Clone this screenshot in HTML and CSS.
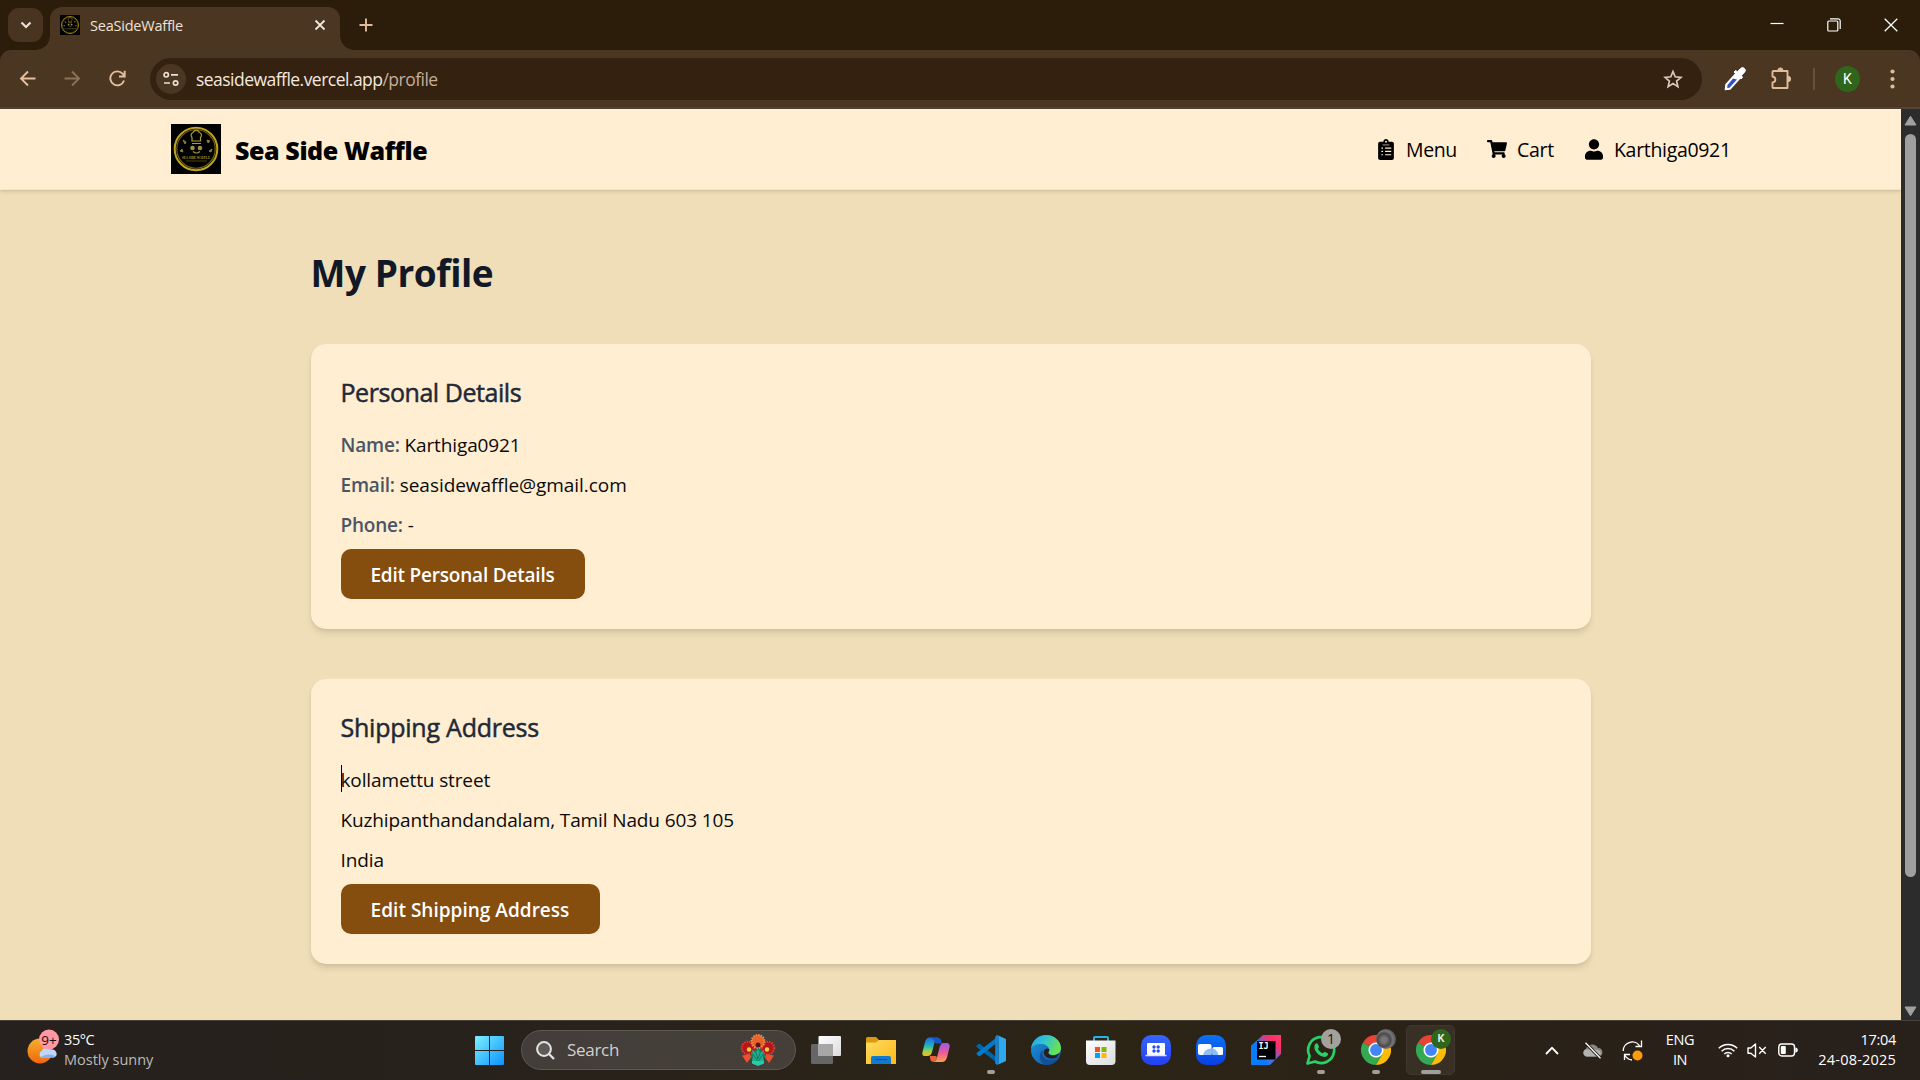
FILE: index.html
```html
<!DOCTYPE html>
<html lang="en">
<head>
<meta charset="utf-8">
<title>SeaSideWaffle</title>
<link rel="stylesheet" href="styles.css">
</head>
<body>
<svg class="defs" width="0" height="0" aria-hidden="true">
  <defs>
    <symbol id="logo" viewBox="0 0 50 50">
      <rect width="50" height="50" fill="#000"/>
      <circle cx="25" cy="25" r="21.300" fill="none" stroke="#bfa31c" stroke-width="2"/>
      <circle cx="25" cy="25" r="19.200" fill="none" stroke="#7a6814" stroke-width="1.100"/>
      <path d="M21 17v-3.500a3 3 0 0 1 1-5 3.600 3.600 0 0 1 6.500 0 3 3 0 0 1 1 5V17zM21 19.500h9" fill="none" stroke="#b39b24" stroke-width="1.200"/>
      <circle cx="21.500" cy="24" r="2.300" fill="#a08d45"/><circle cx="29" cy="24" r="2.300" fill="#a08d45"/>
      <path d="M22 27.500q3.500 3 7 0" fill="none" stroke="#a08d45" stroke-width="1.200"/>
      <path d="M12 16l3 2-1 2zM36 16l3 1-2 2zM9 27l2-2 1 3zM38 27l3-2-1 3z" fill="#8a7a3c" stroke="#8a7a3c"/>
      <text x="25" y="35" text-anchor="middle" textLength="28" lengthAdjust="spacingAndGlyphs" class="logo-text">SEA SIDE WAFFLE</text>
      <path d="M15 37h21" stroke="#6e6217" stroke-width=".7"/>
    </symbol>
    <symbol id="chrome" viewBox="0 0 48 48">
      <path d="M24 24 3.200 12A24 24 0 0 1 44.800 12H24z" fill="#ea4335"/>
      <path d="M24 24 34.400 30 24 48A24 24 0 0 1 3.200 12z" fill="#34a853"/>
      <path d="M24 12H44.800A24 24 0 0 1 24 48L34.400 30z" fill="#fbbc05"/>
      <path d="M24 12a12 12 0 1 0 .01 0z" fill="#fff"/>
      <circle cx="24" cy="24" r="9.500" fill="#4285f4"/>
    </symbol>
    <linearGradient id="gStart" x1="0" y1="0" x2="1" y2="1"><stop offset="0" stop-color="#7df0ff"/><stop offset="1" stop-color="#0a93ff"/></linearGradient>
    <linearGradient id="gSun" x1="0" y1="0" x2="0" y2="1"><stop offset="0" stop-color="#f5b02c"/><stop offset="1" stop-color="#f2660c"/></linearGradient>
    <linearGradient id="gFold" x1="0" y1="0" x2="1" y2="1"><stop offset="0" stop-color="#ffdb62"/><stop offset="1" stop-color="#fbb917"/></linearGradient>
    <linearGradient id="gCop1" x1="0" y1="0" x2="0" y2="1"><stop offset="0" stop-color="#2168e0"/><stop offset=".45" stop-color="#1cb3c4"/><stop offset=".75" stop-color="#a2d242"/><stop offset="1" stop-color="#f4b92c"/></linearGradient>
    <linearGradient id="gCop2" x1="0" y1="0" x2="0" y2="1"><stop offset="0" stop-color="#9a5ae8"/><stop offset=".5" stop-color="#ea5a9c"/><stop offset="1" stop-color="#ffa04b"/></linearGradient>
    <linearGradient id="gEdge1" x1="0" y1="0" x2="1" y2=".4"><stop offset="0" stop-color="#1fa4e4"/><stop offset=".5" stop-color="#31c4cf"/><stop offset="1" stop-color="#66e255"/></linearGradient>
    <linearGradient id="gEdge2" x1="0" y1="0" x2="1" y2="1"><stop offset="0" stop-color="#2196dc"/><stop offset="1" stop-color="#0b4fa4"/></linearGradient>
    <linearGradient id="gIj" x1="0" y1="1" x2="1" y2="0"><stop offset="0" stop-color="#087cfa"/><stop offset=".5" stop-color="#4f6fd8"/><stop offset=".75" stop-color="#fc2d6b"/><stop offset="1" stop-color="#fe4070"/></linearGradient>
    <linearGradient id="gBlue" x1="0" y1="0" x2="0" y2="1"><stop offset="0" stop-color="#3566ff"/><stop offset="1" stop-color="#2440f4"/></linearGradient>
    <linearGradient id="gZoom" x1="0" y1="0" x2="0" y2="1"><stop offset="0" stop-color="#0b72f5"/><stop offset="1" stop-color="#0a3fe0"/></linearGradient>
    <linearGradient id="gWhite" x1="0" y1="0" x2="1" y2="1"><stop offset="0" stop-color="#fff"/><stop offset="1" stop-color="#dcdcdc"/></linearGradient>
  </defs>
</svg>

<header class="tabstrip">
  <button class="tab-search"><svg width="12" height="8" viewBox="0 0 12 8"><path d="M1.500 1.500 6 6l4.500-4.500" fill="none" stroke="#eadfd4" stroke-width="2.200"/></svg></button>
  <div class="tab">
    <svg width="20" height="20"><use href="#logo"/></svg>
    <span class="tab-title">SeaSideWaffle</span>
    <svg width="12" height="12" viewBox="0 0 12 12"><path d="M1.500 1.500l9 9M10.500 1.500l-9 9" stroke="#f1e6dc" stroke-width="1.800"/></svg>
  </div>
  <svg class="new-tab" width="14" height="14" viewBox="0 0 14 14"><path d="M7 .5v13M.5 7h13" stroke="#dfbd9c" stroke-width="1.900"/></svg>
  <div class="window-buttons">
    <svg width="14" height="14" viewBox="0 0 14 14"><path d="M.5 5.500h13" stroke="#fff" stroke-width="1.200"/></svg>
    <svg width="14" height="14" viewBox="0 0 14 14" fill="none" stroke="#fff" stroke-width="1.200"><rect x=".8" y="3" width="10" height="10" rx="1"/><path d="M3 .8h8a2.200 2.200 0 0 1 2.200 2.200v8"/></svg>
    <svg width="14" height="14" viewBox="0 0 14 14"><path d="M.7 .7l12.600 12.600M13.300 .7.7 13.300" stroke="#fff" stroke-width="1.300"/></svg>
  </div>
</header>

<div class="toolbar-wrap">
<div class="toolbar">
  <div class="nav-buttons">
    <svg width="17" height="17" viewBox="0 0 17 17" fill="none" stroke="#e3bf9f" stroke-width="1.900"><path d="M16.500 8.500H2M9 1.500l-7 7 7 7"/></svg>
    <svg width="17" height="17" viewBox="0 0 17 17" fill="none" stroke="#8d725a" stroke-width="1.900"><path d="M.5 8.500H15M8 1.500l7 7-7 7"/></svg>
    <svg width="17" height="17" viewBox="0 0 17 17" fill="none" stroke="#e3bf9f" stroke-width="1.900"><path d="M15 10.500A7 7 0 1 1 13.600 3.700L15.500 6M15.700 .8v5.700H10"/></svg>
  </div>
  <div class="omnibox">
    <span class="site-info"><svg width="16" height="16" viewBox="0 0 16 16" fill="none" stroke="#eadfd4" stroke-width="1.700"><circle cx="3.200" cy="3.800" r="2.200"/><path d="M8 3.800h7M1 12h6"/><circle cx="12.600" cy="12" r="2.200"/></svg></span>
    <span class="url">seasidewaffle.vercel.app<span class="path">/profile</span></span>
    <svg class="star" width="20" height="20" viewBox="0 0 20 20" fill="none" stroke="#d9c8ba" stroke-width="1.700"><path d="M10 2.500l2.200 5.300 5.700.5-4.300 3.700 1.300 5.600L10 14.600l-4.900 3 1.300-5.600L2.100 8.300l5.700-.5z"/></svg>
  </div>
  <svg class="dropper" width="22" height="24" viewBox="0 0 22 24"><path d="M11.500 7 2 17.500 1.500 22.500 6 22 15.500 11.500z" fill="#fff" stroke="#fff" stroke-width="1.500"/><path d="M9 11.500 3.500 18l-.3 3 2.300-.3 7.500-8.200z" fill="#3552c8"/><path d="M10 5l1.500-1.500 2 1.200L16.500 1.500a2.600 2.600 0 0 1 4 3.800L17.500 8.500l1 2L17 12z" fill="#fff" stroke="#fff"/></svg>
  <svg class="puzzle" width="22" height="23" viewBox="0 0 22 23"><path d="M2.500 4h14v7.500V21h-14a1 1 0 0 1-1-1v-4.500c3.800-.6 3.800-5.400 0-6V5a1 1 0 0 1 1-1z" fill="none" stroke="#dfbd9c" stroke-width="1.900" stroke-linejoin="round"/><path d="M6.800 3.500a2.600 2.600 0 0 1 5.200 0zM17 9.300a2.700 2.700 0 0 1 0 5.400z" fill="#dfbd9c" stroke="#dfbd9c"/></svg>
  <span class="separator"></span>
  <span class="avatar">K</span>
  <svg class="kebab" width="5" height="20" viewBox="0 0 5 20" fill="#dfbd9c"><circle cx="2.500" cy="2.500" r="2.100"/><circle cx="2.500" cy="10" r="2.100"/><circle cx="2.500" cy="17.500" r="2.100"/></svg>
</div>
</div>

<div class="viewport">
  <div class="page">
    <nav class="site-nav">
      <div class="brand">
        <svg width="50" height="50"><use href="#logo"/></svg>
        <span class="brand-name">Sea Side Waffle</span>
      </div>
      <div class="links">
        <a class="link link-menu"><svg width="16" height="21" viewBox="0 0 384 512"><path fill="#000" d="M336 64h-80c0-35.300-28.700-64-64-64s-64 28.700-64 64H48C21.500 64 0 85.500 0 112v352c0 26.500 21.500 48 48 48h288c26.500 0 48-21.500 48-48V112c0-26.500-21.500-48-48-48z"/><path d="M80 224h40M170 224h150M80 304h40M170 304h150M80 384h40M170 384h150" stroke="#ffeed2" stroke-width="30"/><circle cx="192" cy="64" r="24" fill="#ffeed2"/><path d="M110 144h164" stroke="#ffeed2" stroke-width="16"/></svg><span>Menu</span></a>
        <a class="link link-cart"><svg width="20" height="20" viewBox="0 0 576 512"><path d="M528.100 301.300l47.300-208C578.800 78.300 567.400 64 552 64H159.200l-9.200-44.800C147.800 8 137.900 0 126.500 0H24C10.700 0 0 10.700 0 24v16c0 13.300 10.700 24 24 24h69.900l70.200 343.400C147.300 417.100 136 435.200 136 456c0 30.900 25.100 56 56 56s56-25.100 56-56c0-15.700-6.400-29.800-16.800-40h209.600C430.400 426.200 424 440.300 424 456c0 30.900 25.100 56 56 56s56-25.100 56-56c0-22.200-12.900-41.300-31.600-50.400l5.500-24.300c3.400-15-8-29.300-23.400-29.300H218.100l-6.500-32h293.100c11.200 0 20.900-7.800 23.400-18.700z"/></svg><span>Cart</span></a>
        <a class="link link-user"><svg width="18" height="21" viewBox="0 0 448 512"><path d="M224 256c70.700 0 128-57.300 128-128S294.700 0 224 0 96 57.300 96 128s57.300 128 128 128zm89.600 32h-16.700c-22.200 10.200-46.900 16-72.900 16s-50.600-5.800-72.900-16h-16.700C60.200 288 0 348.200 0 422.400V464c0 26.500 21.500 48 48 48h352c26.500 0 48-21.500 48-48v-41.600c0-74.200-60.200-134.400-134.400-134.400z"/></svg><span>Karthiga0921</span></a>
      </div>
    </nav>
    <main class="profile">
      <h1>My Profile</h1>
      <section class="card">
        <h2>Personal Details</h2>
        <p class="row-name"><b>Name:</b> Karthiga0921</p>
        <p class="row-email"><b>Email:</b> seasidewaffle@gmail.com</p>
        <p><b>Phone:</b> -</p>
        <button class="edit edit-personal">Edit Personal Details</button>
      </section>
      <section class="card">
        <h2 class="ship-title">Shipping Address</h2>
        <p class="caret-line">kollamettu street</p>
        <p class="row-city">Kuzhipanthandandalam, Tamil Nadu 603 105</p>
        <p>India</p>
        <button class="edit edit-shipping">Edit Shipping Address</button>
      </section>
    </main>
  </div>
  <div class="scrollbar">
    <svg width="13" height="11" viewBox="0 0 13 11"><path d="M6.500 1.200 12 10H1z" fill="#a0a0a0" stroke="#a0a0a0" stroke-linejoin="round"/></svg>
    <div class="thumb"></div>
    <svg width="13" height="11" viewBox="0 0 13 11"><path d="M6.500 9.800 12 1H1z" fill="#a0a0a0" stroke="#a0a0a0" stroke-linejoin="round"/></svg>
  </div>
</div>

<footer class="taskbar">
  <div class="weather">
    <svg width="33" height="36" viewBox="0 0 33 36"><circle cx="13" cy="22" r="12.500" fill="url(#gSun)"/><path d="M14 28.500a4 4 0 0 1 .5-6.500 5.500 5.500 0 0 1 9.500-1 3.800 3.800 0 0 1 3 7.500z" fill="#bfd7f7"/><path d="M13 28.500q7-5 15-1.500l-1 1.500z" fill="#86aeea"/><circle cx="22" cy="10.500" r="10" fill="#ff98a2"/><text x="22" y="15.500" text-anchor="middle" class="badge-text">9+</text></svg>
    <div class="weather-text"><span>35°C</span><span class="muted">Mostly sunny</span></div>
  </div>
  <div class="tasks">
    <svg class="start" width="29" height="29" viewBox="0 0 29 29" fill="url(#gStart)"><path d="M1 0h13v14H0V1a1 1 0 0 1 1-1zM15 0h13a1 1 0 0 1 1 1v13H15zM0 15h14v14H1a1 1 0 0 1-1-1zM15 15h14v13a1 1 0 0 1-1 1H15z"/></svg>
    <div class="search">
      <svg width="19" height="19" viewBox="0 0 19 19" fill="none" stroke="#e6e4e2" stroke-width="2"><circle cx="8" cy="8" r="6.900" fill="#5d5b58"/><path d="M13 13l5 5" stroke-width="2.300"/></svg>
      <span>Search</span>
      <svg class="flowers" width="36" height="32" viewBox="0 0 36 32"><path d="M8 26 18 15l10 11M18 12v18" stroke="#12826a" stroke-width="2.500" fill="none"/><circle cx="8" cy="14" r="6.300" fill="#b5161c" stroke="#e03a2c" stroke-width="2" stroke-dasharray="1.500 1"/><circle cx="28" cy="14" r="6.300" fill="#b5161c" stroke="#e03a2c" stroke-width="2" stroke-dasharray="1.500 1"/><circle cx="18" cy="7.500" r="6.500" fill="#e8632a" stroke="#f48b4b" stroke-width="2" stroke-dasharray="1.500 1"/><circle cx="18" cy="11" r="2.500" fill="#5e1518"/><circle cx="9" cy="15.500" r="2.200" fill="#f5d12e"/><circle cx="27" cy="15.500" r="2.200" fill="#f5d12e"/><path d="M2 21.500l8-1.500 1 3-4 6zM34 21.500l-8-1.500-1 3 4 6z" fill="#ef4e30"/><path d="M18 15l2 4 4-3-1 6 1 5-6 4-6-4 1-5-1-6 4 3z" fill="#1fae8c"/><path d="M16 19l2 6 2-6M13 20l5 8 5-8" fill="none" stroke="#0f7a68"/><path d="M12 27h12v2.500l-6 2.500-6-2.500z" fill="#28cda8"/></svg>
    </div>
    <div class="cell"><svg width="30" height="28" viewBox="0 0 30 28"><rect y="8" width="22" height="20" rx="1.500" fill="#666"/><rect x="7.500" width="22.500" height="20" rx="1" fill="url(#gWhite)"/><path d="M7.500 8H22v12H7.500z" fill="#a7a7a7"/></svg></div>
    <div class="cell"><svg width="30" height="27" viewBox="0 0 30 27"><path d="M0 1.500A1.500 1.500 0 0 1 1.500 0H10l3 3h15v6H0z" fill="#d99a0b"/><path d="M0 5.500h10L13 3h17v24H0z" fill="url(#gFold)"/><path d="M5 27v-6a2 2 0 0 1 2-2h16a2 2 0 0 1 2 2v6z" fill="#1279cf"/><path d="M9 22.500h12" stroke="#0a549c"/></svg></div>
    <div class="cell"><svg width="28" height="26" viewBox="0 0 28 26"><path d="M7 .5h9.500q-3 1-4 5L10 15q-1 4-4.500 4H2.500Q-.5 19 .5 15L3 5Q4.500.5 7 .5z" fill="url(#gCop1)"/><path d="M10 1h7q2 .5 2.500 3.500l.5 2h-5.500q-2-.5-2.500-3z" fill="#1656c8"/><path d="M21 6h3.500q4 .3 3 4.500L25 20.500Q23.500 25 20 25h-9q3-.5 4-4.500l2.500-10Q18.500 6.500 21 6z" fill="url(#gCop2)"/><path d="M8 19h6l1 1.500Q14 25 11 25q-2.500-.5-3-3.500z" fill="#e9623c"/></svg></div>
    <div class="cell running"><svg width="30" height="30" viewBox="0 0 100 100"><path d="M2 36 8 30q3-2 6 0L75 80v17L3 41q-3-3-1-5z" fill="#0065a9"/><path d="M2 64 8 70q3 2 6 0L75 22V3L3 59q-3 3-1 5z" fill="#007acc"/><path d="M70 100 100 87V13L70 0q5 2 5 8v84q0 6-5 8z" fill="#2fa9ee"/><path d="M70 100q5-3 5-8V8q0-5-5-8L64 5v90z" fill="#1583d2"/></svg></div>
    <div class="cell"><svg width="30" height="30" viewBox="0 0 30 30"><circle cx="15" cy="15" r="15" fill="url(#gEdge2)"/><path d="M0 14C1 5 8 0 15 0c8.500 0 15 6 15 13 0 5-4 7-7.500 7-3.500 0-5.500-1.300-5-2.500.8-1 1-2 .8-3.300C17.500 11 14 9 10 9 5 9 1 11 0 14z" fill="url(#gEdge1)"/><path d="M11.500 15c-1.500 6 3 10.500 8 10.500 4 0 6-1.300 8-3 .5-.3 1 0 .7.600C25.500 27.500 21 30 16 30 8 29 7 19 11.500 15z" fill="#124f94"/><path d="M18.300 14.500c0 2-1.500 2.500-.8 4 1 1.700 4 2.500 6.500 1.800q3-.8 4.500-2.300-2 5.500-8 5.500c-6 0-9.500-5-7-8.500 1.500-2 4-2 4.800-.5z" fill="#27211a"/></svg></div>
    <div class="cell"><svg width="30" height="30" viewBox="0 0 30 30"><path d="M8 6V3a1 1 0 0 1 1-1h12a1 1 0 0 1 1 1v3" fill="none" stroke="#23b3e8" stroke-width="2"/><path d="M0 5.500h29.500V26a4 4 0 0 1-4 4H4a4 4 0 0 1-4-4z" fill="url(#gWhite)"/><path d="M9 12h5v5H9z" fill="#f25022"/><path d="M15.500 12h5v5h-5z" fill="#7fba00"/><path d="M9 18h5v5H9z" fill="#00a4ef"/><path d="M15.500 18h5v5h-5z" fill="#ffb900"/></svg></div>
    <div class="cell"><svg width="30" height="30" viewBox="0 0 30 30"><rect width="30" height="30" rx="10.500" fill="url(#gBlue)"/><rect x="6" y="8" width="18" height="12" rx="1" fill="#fff"/><path d="M4.500 20.500h21" stroke="#dce5ff" stroke-width="1.500"/><g fill="#2a4df8"><circle cx="13" cy="12" r="1.700"/><circle cx="17.200" cy="12" r="1.700"/><circle cx="13" cy="16" r="1.700"/><circle cx="17.200" cy="16" r="1.700"/></g></svg></div>
    <div class="cell"><svg width="30" height="30" viewBox="0 0 30 30"><rect width="30" height="30" rx="10.500" fill="url(#gZoom)"/><rect x="2" y="9" width="13.500" height="11" rx="2" fill="#fff"/><rect x="16.500" y="12" width="10.500" height="8" rx="1.500" fill="#fff"/><path d="M7 20a8 7 0 0 1 8.500-6.500V20zM16.500 13.500Q21 14 22.500 20h-6z" fill="#8fc0f5"/></svg></div>
    <div class="cell"><svg width="30" height="30" viewBox="0 0 30 30"><path d="M12 0h18v19L19 30H0V11z" fill="url(#gIj)"/><path d="M0 11 9 3v15l10 12H0z" fill="#087cfa"/><rect x="6" y="6" width="18.500" height="18.500" fill="#000"/><text x="7.500" y="14" class="ij">IJ</text><path d="M8 21.500h7" stroke="#fff" stroke-width="1.300"/></svg></div>
    <div class="cell running"><svg width="30" height="30" viewBox="0 0 30 30"><path d="M1.500 28.500 3.600 21A13 13 0 1 1 9 26.500z" fill="none" stroke="#25d366" stroke-width="2.700" stroke-linejoin="round"/><path d="M9 9.500c1-1.700 2.400-1.500 2.800-.5l1.200 2.800c.2.700-1 1.700-1 2.200 1 2 2.500 3.300 4.700 4.200.6.100 1.500-1.500 2.100-1.400l2.900 1.500c.7.500.3 2.500-1.400 3.200-3 1.300-6.700-.7-9-3.200C9 15.800 7.500 12.500 9 9.500z" fill="#25d366"/></svg><span class="count">1</span></div>
    <div class="cell running"><svg width="30" height="30"><use href="#chrome"/></svg><span class="count moon"></span></div>
    <div class="cell running active"><svg width="30" height="30"><use href="#chrome"/></svg><span class="count user">K</span></div>
  </div>
  <div class="tray">
    <svg class="t-up" width="14" height="9" viewBox="0 0 14 9"><path d="M1 8l6-6.200L13 8" fill="none" stroke="#fff" stroke-width="1.800"/></svg>
    <svg class="t-cloud" width="21" height="17" viewBox="0 0 21 17"><path d="M4 14.500a4 4 0 0 1 0-7.500 6.500 6.500 0 0 1 12-1 4.300 4.300 0 0 1 1 8.500z" fill="#8a8885"/><path d="M4 14.500a4 4 0 0 1-1-7l9-.2 6 1.500a4 4 0 0 1-1 5.700z" fill="#b5b3b1"/><path d="M3.500.8l15 15.500" stroke="#272019" stroke-width="3.200"/><path d="M3.500.8l15 15.500" stroke="#fff" stroke-width="1.300"/></svg>
    <svg class="t-sync" width="21" height="21" viewBox="0 0 21 21"><path d="M1.200 11A9 9 0 0 1 18 6.500M19.500 .5v6h-6M2.500 20v-5.500H8M3 15.500q2 3.800 7 4.500" fill="none" stroke="#fff" stroke-width="1.300"/><circle cx="15.500" cy="15.500" r="5" fill="#ff9a0a"/></svg>
    <div class="lang"><span>ENG</span><span>IN</span></div>
    <svg class="t-wifi" width="20" height="16" viewBox="0 0 20 16" fill="none" stroke="#fff" stroke-width="1.500"><path d="M.8 6.200a13 13 0 0 1 18.400 0M3.600 9.200a9 9 0 0 1 12.800 0M6.300 12a5.200 5.200 0 0 1 7.400 0"/><circle cx="10" cy="13.700" r="1.500" fill="#fff" stroke="none"/></svg>
    <svg class="t-vol" width="20" height="15" viewBox="0 0 20 15" fill="none" stroke="#fff" stroke-width="1.400" stroke-linejoin="round"><path d="M1 5h2.800L8.500 1v13L3.800 10.200H1zM12.200 4l6.500 6.800M18.700 4l-6.500 6.800"/></svg>
    <svg class="t-bat" width="20" height="14" viewBox="0 0 20 14"><rect x=".8" y="1" width="15.700" height="12" rx="3" fill="none" stroke="#fff" stroke-width="1.400"/><rect x="2.800" y="3" width="5" height="8" rx="1" fill="#fff"/><path d="M17.300 4.500q2.500 0 2.500 2.500t-2.500 2.500z" fill="#fff"/></svg>
    <div class="clock"><span>17:04</span><span class="date">24-08-2025</span></div>
  </div>
</footer>
</body>
</html>
```
FILE: styles.css
```css
* { box-sizing: border-box; }
body {
  margin: 0;
  width: 1920px;
  height: 1080px;
  overflow: hidden;
  display: flex;
  flex-direction: column;
  font-family: "Open Sans", "Noto Sans", sans-serif;
  background: #2c1c0a;
}
svg { display: block; flex: none; }
svg.defs { position: absolute; }
button { border: 0; padding: 0; font-family: inherit; }
.logo-text { font: bold 4px "Liberation Serif", serif; fill: #b89d28; }

/* Browser tab strip */
.tabstrip {
  height: 50px;
  flex: none;
  display: flex;
  align-items: center;
  padding-left: 8px;
  background: #2c1c0a;
}
.tab-search {
  width: 35px;
  height: 34px;
  border-radius: 11px;
  background: #49351f;
  display: grid;
  place-items: center;
}
.tab {
  position: relative;
  align-self: flex-end;
  width: 290px;
  height: 43px;
  margin-left: 7px;
  padding: 0 14px 7px 10px;
  border-radius: 12px 12px 0 0;
  background: #4b3621;
  display: flex;
  align-items: center;
}
.tab::before, .tab::after {
  content: "";
  position: absolute;
  bottom: 0;
  width: 14px;
  height: 14px;
}
.tab::before { left: -14px; background: radial-gradient(circle at 0 0, transparent 13.500px, #4b3621 14px); }
.tab::after { right: -14px; background: radial-gradient(circle at 100% 0, transparent 13.500px, #4b3621 14px); }
.tab-title {
  flex: 1;
  margin-left: 10px;
  font-size: 14.500px;
  letter-spacing: -0.220px;
  color: #eee2d6;
}
.new-tab { margin-left: 19px; }
.window-buttons {
  margin-left: auto;
  padding-right: 22px;
  display: flex;
  gap: 43px;
}

/* Toolbar */
.toolbar-wrap { background: #2c1c0a; flex: none; }
.toolbar {
  height: 59px;
  border-radius: 11px 11px 0 0;
  background: #4b3621;
  border-bottom: 2px solid #51453b;
  display: flex;
  align-items: center;
}
.nav-buttons {
  width: 150px;
  padding-left: 19px;
  display: flex;
  gap: 28px;
}
.omnibox {
  width: 1552px;
  height: 42px;
  border-radius: 21px;
  background: #34210f;
  display: flex;
  align-items: center;
  padding: 0 19px 0 6px;
}
.site-info {
  width: 30px;
  height: 30px;
  border-radius: 50%;
  background: #4b3621;
  display: grid;
  place-items: center;
}
.url {
  flex: 1;
  margin-left: 10px;
  padding-top: 1px;
  font-size: 17.500px;
  letter-spacing: -0.530px;
  color: #f5e9df;
}
.path { color: #c5ad98; }
.dropper { margin-left: 22px; }
.puzzle { margin-left: 25px; }
.separator { width: 2px; height: 22px; margin-left: 20px; background: #6a5039; }
.avatar {
  width: 25px;
  height: 26px;
  border-radius: 50%;
  margin-left: 20px;
  background: #2f661b;
  color: #fff;
  font: 14px/26px Roboto, sans-serif;
  text-align: center;
}
.kebab { margin-left: 30px; }

/* Page */
.viewport { height: 911px; flex: none; display: flex; }
.page { width: 1901px; background: #efdeb7; }
.site-nav {
  height: 81px;
  padding: 0 171px;
  background: #ffeed2;
  border-bottom: 1px solid #e5e7eb;
  box-shadow: 0 1px 4px rgba(0, 0, 0, 0.180);
  display: flex;
  align-items: center;
  justify-content: space-between;
}
.brand { display: flex; align-items: center; gap: 14px; }
.brand-name {
  font-size: 25px;
  font-weight: 800;
  letter-spacing: -0.400px;
  line-height: 35px;
  padding-top: 2px;
}
.links { display: flex; gap: 30px; font-size: 19.500px; line-height: 30px; }
.link { display: flex; align-items: center; }
.link span { padding-top: 2px; }
.link-menu { width: 79px; gap: 12px; letter-spacing: -0.400px; }
.link-cart { width: 68px; gap: 10px; letter-spacing: -0.300px; }
.link-user { width: 145px; gap: 11px; letter-spacing: -0.320px; }
.profile {
  width: 1280px;
  margin: 0 auto;
  padding-top: 60px;
}
h1 {
  margin: 0 0 49px;
  font-size: 37px;
  line-height: 46px;
  height: 45px;
  font-weight: 700;
  letter-spacing: -0.450px;
  color: #111827;
}
.card {
  height: 285px;
  margin-bottom: 50px;
  padding: 30px;
  border-radius: 15px;
  background: #ffeed2;
  box-shadow: 0 5px 7px -1px rgba(0, 0, 0, 0.100), 0 2px 5px -2px rgba(0, 0, 0, 0.100);
  display: flex;
  flex-direction: column;
  align-items: flex-start;
  gap: 10px;
}
h2 {
  margin: 0 0 10px;
  height: 35px;
  font-size: 25px;
  line-height: 37px;
  font-weight: 400;
  letter-spacing: -0.450px;
  color: #1f2937;
  -webkit-text-stroke: 0.500px #1f2937;
}
.ship-title { letter-spacing: -0.230px; }
p {
  margin: 0;
  height: 30px;
  font-size: 19px;
  line-height: 32px;
  letter-spacing: -0.120px;
  color: #0a0a0a;
}
p b { font-weight: 600; letter-spacing: -0.200px; color: #4b5563; }
.row-email { letter-spacing: -0.050px; }
.caret-line { position: relative; }
.caret-line::before {
  content: "";
  position: absolute;
  left: 0;
  top: 1px;
  width: 1px;
  height: 27px;
  background: #000;
}
.edit {
  height: 50px;
  padding-top: 2px;
  border-radius: 10px;
  background: #854d0e;
  color: #fff;
  font-size: 19px;
  font-weight: 600;
  letter-spacing: -0.200px;
  text-align: center;
  white-space: nowrap;
}
.edit-personal { width: 244px; }
.edit-shipping { width: 259px; letter-spacing: 0.020px; }

.scrollbar {
  width: 19px;
  background: #2c2c2c;
  display: flex;
  flex-direction: column;
  align-items: center;
  padding: 6px 0 3px;
}
.thumb {
  width: 11px;
  height: 743px;
  margin: 8px 0 auto;
  border-radius: 6px;
  background: #9f9f9f;
}

/* Taskbar */
.taskbar {
  height: 60px;
  display: flex;
  align-items: center;
  background: linear-gradient(90deg, #26211e, #28221b 30%, #2c2415 58%, #2a2218 80%, #28201b);
  border-top: 1px solid #45413c;
  color: #fff;
  font-size: 14.500px;
  line-height: 20px;
}
.weather { width: 475px; padding-left: 27px; display: flex; align-items: center; gap: 4px; }
.weather svg { margin-top: -7px; }
.badge-text { font-size: 13.500px; fill: #1c0d0e; }
.weather-text { display: flex; flex-direction: column; letter-spacing: -0.400px; margin-top: -2px; }
.muted { color: #bdbab8; letter-spacing: 0; }
.tasks { display: flex; align-items: center; height: 100%; margin-top: -1px; }
.search {
  width: 275px;
  height: 40px;
  margin: 0 2px 0 17px;
  padding: 0 19px 0 14px;
  border: 1px solid #5c5955;
  border-radius: 20px;
  background: linear-gradient(90deg, #433d3b, #434038 60%, #453f3a);
  display: flex;
  align-items: center;
  font-size: 17px;
  letter-spacing: -0.300px;
  color: #d3d0cd;
}
.search span { margin-left: 12px; flex: 1; }
.cell {
  position: relative;
  width: 55px;
  height: 50px;
  display: grid;
  place-items: center;
}
.running::after {
  content: "";
  position: absolute;
  left: 24px;
  bottom: 1px;
  width: 8px;
  height: 4px;
  border-radius: 2px;
  background: #a29f9a;
}
.active::before {
  content: "";
  position: absolute;
  inset: 0 3px;
  border-radius: 5px;
  background: #383025;
  border: 1px solid #403830;
}
.active svg { position: relative; }
.active::after { left: 18px; width: 20px; }
.count {
  position: absolute;
  left: 28px;
  top: 4px;
  width: 20px;
  height: 20px;
  border-radius: 50%;
  background: #a3a19d;
  color: #14120f;
  font-size: 14px;
  text-align: center;
}
.moon { background: radial-gradient(circle at 40% 55%, #777 0 15%, #4a4a4c 40%, #77777a 55%, #3a3a3c 90%); }
.user { background: #2f661b; color: #e5eee0; font: 600 11px/20px Roboto, sans-serif; }
.ij { font: bold 8.500px "DejaVu Sans Mono", monospace; fill: #fff; }
.tray { margin-left: auto; padding-right: 24px; display: flex; align-items: center; margin-top: -1px; }
.t-up { margin-right: 23px; }
.t-cloud { margin-right: 19px; }
.t-sync { margin-right: 21px; }
.lang { width: 32px; display: flex; flex-direction: column; align-items: center; letter-spacing: -0.400px; margin: -1px 22px 0 0; }
.t-wifi { margin-right: 9px; }
.t-vol { margin-right: 11px; }
.t-bat { margin-right: 20px; }
.clock { width: 78px; display: flex; flex-direction: column; align-items: flex-end; letter-spacing: -0.300px; white-space: nowrap; margin-top: -1px; }
.date { letter-spacing: 0.200px; }
```
